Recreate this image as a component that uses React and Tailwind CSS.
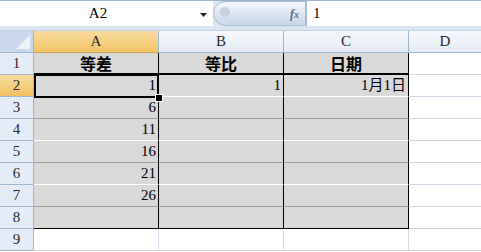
import React from "react";

const serif = { fontFamily: '"Liberation Serif", "Noto Sans CJK SC", serif' };

const data = [
  ["等差", "等比", "日期"],
  ["1", "1", "1月1日"],
  ["6", "", ""],
  ["11", "", ""],
  ["16", "", ""],
  ["21", "", ""],
  ["26", "", ""],
  ["", "", ""],
];

const bottomClass = {
  1: "border-b-2 border-b-black",
  2: "border-b border-b-white",
  3: "border-b border-b-[#9c9c9c]",
  4: "border-b border-b-white",
  5: "border-b border-b-[#9c9c9c]",
  6: "border-b border-b-white",
  7: "border-b border-b-[#9c9c9c]",
  8: "border-b border-b-black",
};

function RowHeader({ n, selected }) {
  return (
    <div
      className={
        "w-[34px] shrink-0 h-[22px] box-border border-r border-b border-r-[#9eb6ce] border-b-[#9eb6ce] flex items-center justify-center text-[15px] text-[#2a2a2a] " +
        (selected ? "bg-gradient-to-b from-[#f9dc9f] to-[#f1c15f]" : "bg-[#e4ecf7]")
      }
      style={serif}
    >
      {n}
    </div>
  );
}

export default function App() {
  return (
    <div className="w-[481px] h-[252px] overflow-hidden bg-white relative select-none">
      {/* formula bar */}
      <div className="h-[31px] box-border bg-[#dbe5f2] border-t border-t-[#9fb3cc] border-b border-b-[#c3d1e4] flex items-start">
        <div className="w-[213px] h-[25px] bg-white flex items-center relative">
          <div className="w-[196px] text-center text-[15px] text-black" style={serif}>
            A2
          </div>
          <svg width="8" height="5" viewBox="0 0 8 5" className="absolute left-[200px] top-[12px]">
            <path d="M0 0 H7 L3.5 4 Z" fill="#222" />
          </svg>
        </div>
        <div className="w-[93px] h-[25px] rounded-l-full bg-gradient-to-b from-[#f4f7fb] via-[#dde6f2] to-[#c8d6e8] border border-[#a9bcd4] box-border flex items-center justify-end pr-[6px] relative">
          <div className="absolute left-[6px] top-[5px] w-[10px] h-[10px] rounded-full bg-[#c9d2dc]"></div>
          <span className="text-[12px] italic font-bold text-[#5a6a80]" style={serif}>
            f<span className="text-[10px]">x</span>
          </span>
        </div>
        <div className="flex-1 h-[25px] bg-white border-l border-l-[#a9bcd4] flex items-center pl-[6px] text-[15px] text-black" style={serif}>
          1
        </div>
      </div>

      {/* column headers */}
      <div className="flex h-[22px]">
        <div className="w-[34px] shrink-0 h-[22px] box-border border-r border-b border-r-[#9eb6ce] border-b-[#9eb6ce] bg-[#c9d8ec] relative">
          <svg width="14" height="14" viewBox="0 0 14 14" className="absolute right-[3px] bottom-[3px]">
            <path d="M14 0 L14 14 L0 14 Z" fill="#eef3fa" />
          </svg>
        </div>
        {["A", "B", "C"].map((c, i) => (
          <div
            key={c}
            className={
              "w-[125px] shrink-0 h-[22px] box-border border-r border-b border-r-[#9eb6ce] flex items-center justify-center text-[15px] text-[#2a2a2a] " +
              (i === 0
                ? "bg-gradient-to-b from-[#f9dba0] to-[#f2c462] border-b-[#c9a05a]"
                : "bg-gradient-to-b from-[#f6f8fc] to-[#e4ebf5] border-b-[#9eb6ce]")
            }
            style={serif}
          >
            {c}
          </div>
        ))}
        <div className="flex-1 h-[22px] box-border border-b border-b-[#9eb6ce] bg-gradient-to-b from-[#f6f8fc] to-[#e4ebf5] flex items-center justify-center text-[15px] text-[#2a2a2a]" style={serif}>
          D
        </div>
      </div>

      {/* data rows */}
      {data.map((row, r) => {
        const n = r + 1;
        return (
          <div key={n} className="flex h-[22px]">
            <RowHeader n={n} selected={n === 2} />
            {row.map((v, c) => (
              <div
                key={c}
                className={
                  "w-[125px] shrink-0 h-[22px] box-border bg-[#d9d9d9] border-r border-r-black flex items-center text-black " +
                  bottomClass[n] +
                  (n === 1 ? " justify-center font-bold text-[16px]" : " justify-end pr-[2px] text-[15px]")
                }
                style={
                  n === 1
                    ? { fontFamily: '"Noto Sans CJK SC", sans-serif', fontWeight: 700 }
                    : serif
                }
              >
                {v}
              </div>
            ))}
            <div className="flex-1 h-[22px] box-border border-b border-b-[#d0d7e5] bg-white"></div>
          </div>
        );
      })}

      {/* row 9 */}
      <div className="flex h-[22px]">
        <RowHeader n={9} />
        {[0, 1, 2].map((c) => (
          <div key={c} className="w-[125px] shrink-0 h-[22px] box-border border-r border-b border-r-[#d0d7e5] border-b-[#d0d7e5] bg-white"></div>
        ))}
        <div className="flex-1 h-[22px] box-border border-b border-b-[#d0d7e5] bg-white"></div>
      </div>

      {/* selection A2 */}
      <div className="absolute left-[34px] top-[74px] w-[125px] h-[24px] box-border border-2 border-black pointer-events-none"></div>
      <div className="absolute left-[155px] top-[94px] w-[6px] h-[6px] bg-black border border-white box-content"></div>
    </div>
  );
}
